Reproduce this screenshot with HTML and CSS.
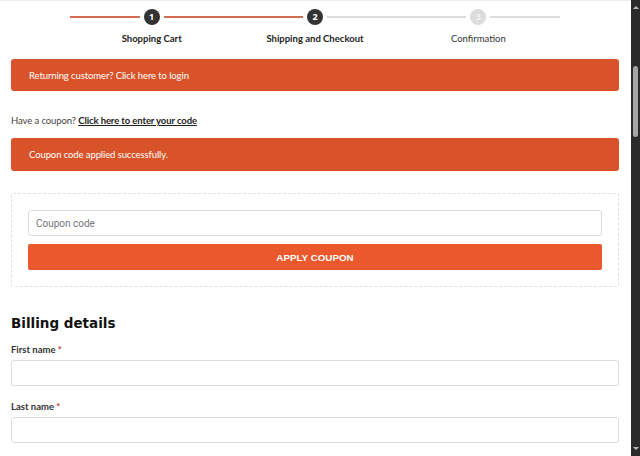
FILE: index.html
```html
<!DOCTYPE html>
<html lang="en">
<head>
<meta charset="utf-8">
<title>Checkout</title>
<link rel="stylesheet" href="styles.css">
</head>
<body>
<div class="page">
  <main class="content">
    <ol class="stepper">
      <li class="step done">
        <div class="track"><span class="seg seg-on"></span><span class="dot">1</span><span class="seg seg-on"></span></div>
        <span class="step-label strong">Shopping Cart</span>
      </li>
      <li class="step current">
        <div class="track"><span class="seg seg-on"></span><span class="dot">2</span><span class="seg"></span></div>
        <span class="step-label strong">Shipping and Checkout</span>
      </li>
      <li class="step todo">
        <div class="track"><span class="seg"></span><span class="dot dot-off">3</span><span class="seg"></span></div>
        <span class="step-label">Confirmation</span>
      </li>
    </ol>

    <div class="notice notice-login">Returning customer? Click here to login</div>

    <p class="coupon-toggle">Have a coupon? <a href="#" class="coupon-link">Click here to enter your code</a></p>

    <div class="notice notice-success">Coupon code applied successfully.</div>

    <form class="coupon-box">
      <input class="field coupon-input" type="text" placeholder="Coupon code">
      <button class="apply-btn" type="button">APPLY COUPON</button>
    </form>

    <h3 class="billing-title">Billing details</h3>

    <div class="form-row first-row">
      <label class="form-label">First name <abbr class="req">*</abbr></label>
      <input class="field name-input" type="text">
    </div>
    <div class="form-row">
      <label class="form-label">Last name <abbr class="req">*</abbr></label>
      <input class="field name-input" type="text">
    </div>
  </main>
  <aside class="scrollbar">
    <span class="arrow arrow-up"></span>
    <span class="thumb"></span>
    <span class="arrow arrow-down"></span>
  </aside>
</div>
</body>
</html>
```

FILE: styles.css
```css
* { box-sizing: border-box; }
html, body { margin: 0; padding: 0; height: 100%; }
body {
  background: #fff;
  font-family: Lato, "Open Sans", Arial, sans-serif;
  color: #333;
  overflow: hidden;
}
.page {
  display: flex;
  height: 456px;
}
.content {
  flex: 1;
  padding: 0 12px 0 11px;
  border-top: 1px solid #ececec;
  overflow: hidden;
}

/* stepper */
.stepper {
  list-style: none;
  margin: 8px auto 0;
  padding: 0;
  width: 490px;
  display: grid;
  grid-template-columns: repeat(3, 1fr);
}
.step {
  display: flex;
  flex-direction: column;
  align-items: center;
}
.track {
  width: 100%;
  height: 16px;
  display: flex;
  align-items: center;
}
.seg {
  flex: 1;
  height: 1.5px;
  background: #dcdcdc;
}
.seg-on { background: #cf6d52; }
.dot {
  width: 16px;
  height: 16px;
  margin: 0 4px;
  border-radius: 50%;
  background: #333;
  color: #fff;
  font-family: "Open Sans", Arial, sans-serif;
  font-weight: 700;
  font-size: 9px;
  line-height: 16px;
  text-align: center;
}
.dot-off { background: #dcdcdc; color: #f4f4f4; }
.step-label {
  margin-top: 7px;
  font-size: 9.5px;
  line-height: 14px;
  color: #333;
}
.step-label.strong { font-weight: 700; color: #222; }

/* notices */
.notice {
  background: #d9532a;
  color: #fff;
  border-radius: 3px;
  display: flex;
  align-items: center;
  padding: 0 18px;
  font-size: 9.5px;
  letter-spacing: -0.1px;
}
.notice-login { margin-top: 13px; height: 32px; }
.notice-success { margin-top: 10px; height: 33px; }

.coupon-toggle {
  margin: 23px 0 0;
  font-size: 9.5px;
  letter-spacing: -0.1px;
  line-height: 14px;
  color: #444;
}
.coupon-link {
  color: #222;
  font-weight: 700;
  text-decoration: underline;
}

/* coupon box */
.coupon-box {
  margin-top: 22px;
  border: 1px dashed #e0e0e0;
  border-radius: 2px;
  padding: 16px;
  display: flex;
  flex-direction: column;
  gap: 8px;
}
.field {
  display: block;
  width: 100%;
  border: 1px solid #dcdcdc;
  border-radius: 3px;
  background: #fff;
  outline: none;
  margin: 0;
}
.coupon-input {
  height: 26px;
  padding: 0 7px;
  font-family: Roboto, Arial, sans-serif;
  font-size: 10px;
  color: #333;
}
.coupon-input::placeholder { color: #777; }
.apply-btn {
  height: 26px;
  border: none;
  border-radius: 2px;
  background: #ea582c;
  color: #fff;
  font-family: "Liberation Sans", Arial, sans-serif;
  font-weight: 700;
  font-size: 9.8px;
  padding: 0;
}

/* billing */
.billing-title {
  margin: 27px 0 0;
  font-family: "DejaVu Sans", Verdana, sans-serif;
  font-weight: 700;
  font-size: 13.5px;
  line-height: 18px;
  color: #111;
}
.form-row { margin-top: 14px; }
.form-row.first-row { margin-top: 11px; }
.form-label {
  display: block;
  font-size: 9.5px;
  line-height: 13px;
  font-weight: 700;
  color: #333;
}
.req {
  color: #c0392b;
  text-decoration: none;
  border: none;
}
.name-input {
  margin-top: 4px;
  height: 26px;
}

/* fake scrollbar */
.scrollbar {
  width: 9px;
  flex: 0 0 9px;
  background: #2b2b2b;
  display: flex;
  flex-direction: column;
  align-items: center;
  position: relative;
}
.arrow {
  position: absolute;
  left: 50%;
  transform: translateX(-50%);
  width: 0;
  height: 0;
  border-left: 3px solid transparent;
  border-right: 3px solid transparent;
}
.arrow-up { top: 6px; border-bottom: 3px solid #bdbdbd; }
.arrow-down { bottom: 6px; border-top: 3px solid #bdbdbd; }
.thumb {
  margin-top: 66px;
  width: 5px;
  height: 71px;
  border-radius: 3px;
  background: #a6a6a6;
}
```
